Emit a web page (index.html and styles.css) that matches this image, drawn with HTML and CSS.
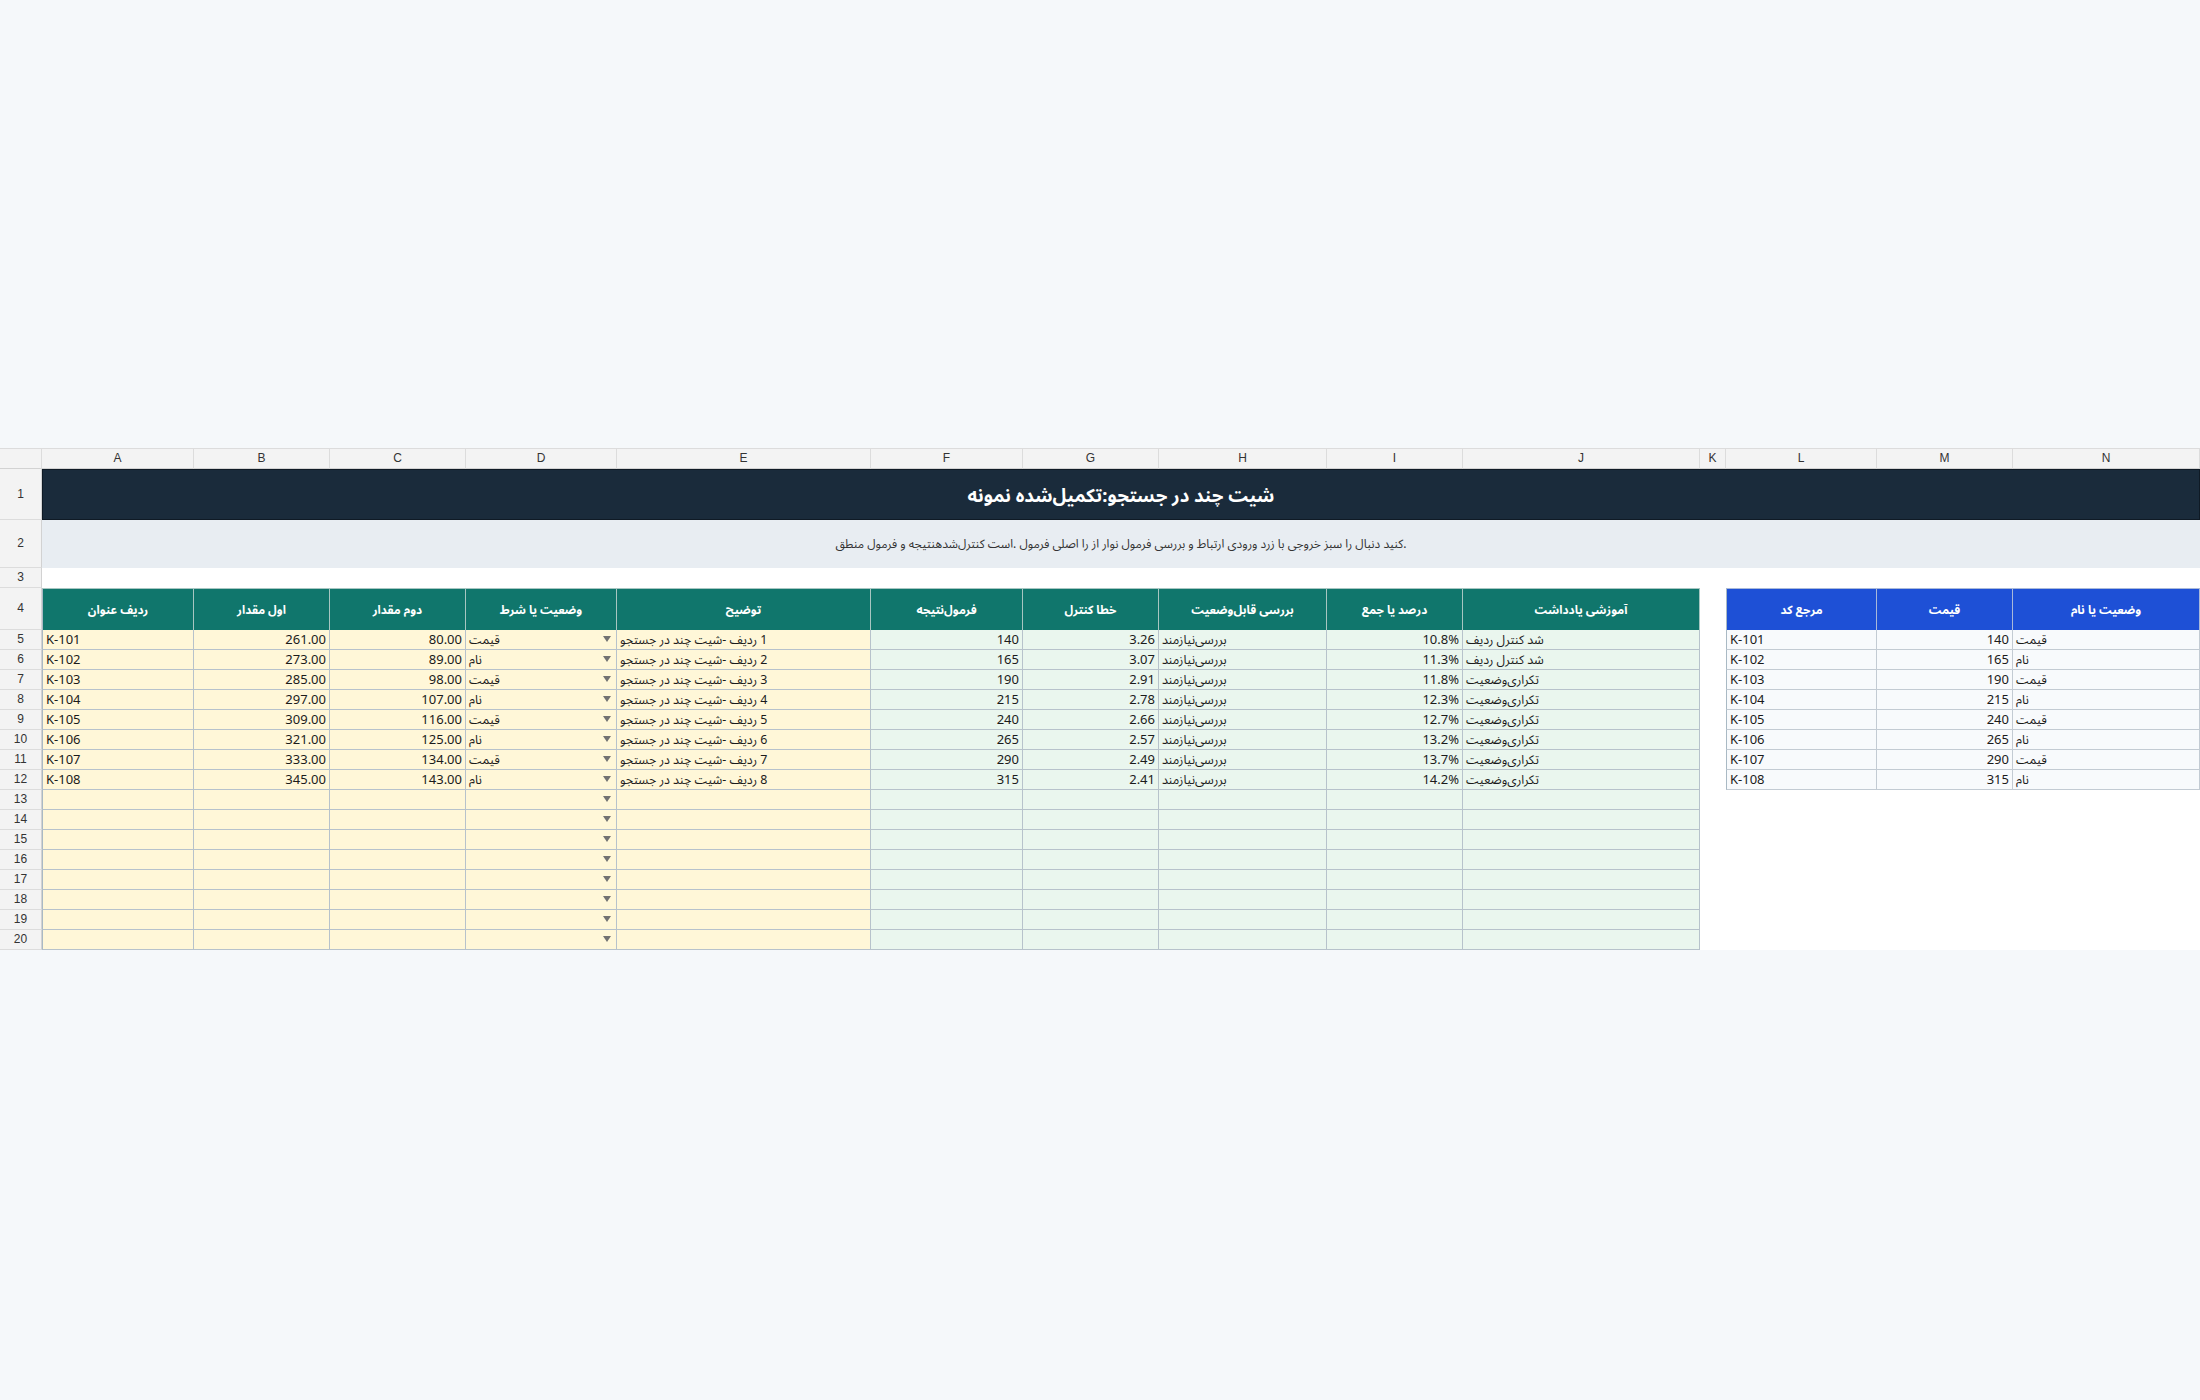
FILE: index.html
```html
<!DOCTYPE html>
<html lang="fa">
<head>
<meta charset="utf-8">
<title>شیت چند در جستجو</title>
<link rel="stylesheet" href="styles.css">
</head>
<body>
<main class="page">
<div class="sheet">
  <div class="c ch"></div><div class="c ch">A</div><div class="c ch">B</div><div class="c ch">C</div><div class="c ch">D</div><div class="c ch">E</div><div class="c ch">F</div><div class="c ch">G</div><div class="c ch">H</div><div class="c ch">I</div><div class="c ch">J</div><div class="c ch">K</div><div class="c ch">L</div><div class="c ch">M</div><div class="c ch">N</div>

  <div class="c rh">1</div><div class="c title" dir="rtl">شیت چند در جستجو:تکمیل&zwnj;شده نمونه</div>
  <div class="c rh">2</div><div class="c note" dir="rtl">.کنید دنبال را سبز خروجی با زرد ورودی ارتباط و بررسی فرمول نوار از را اصلی فرمول .است کنترل&zwnj;شدهنتیجه و فرمول منطق</div>
  <div class="c rh">3</div><div class="c spacer"></div>

  <div class="c rh">4</div>
  <div class="c hd first" dir="rtl">ردیف عنوان</div><div class="c hd" dir="rtl">اول مقدار</div><div class="c hd" dir="rtl">دوم مقدار</div><div class="c hd" dir="rtl">وضعیت یا شرط</div><div class="c hd" dir="rtl">توضیح</div><div class="c hd" dir="rtl">فرمول&zwnj;نتیجه</div><div class="c hd" dir="rtl">خطا کنترل</div><div class="c hd" dir="rtl">بررسی قابل&zwnj;وضعیت</div><div class="c hd" dir="rtl">درصد یا جمع</div><div class="c hd" dir="rtl">آموزشی یادداشت</div>
  <div class="c"></div>
  <div class="c hd blue first" dir="rtl">مرجع کد</div><div class="c hd blue" dir="rtl">قیمت</div><div class="c hd blue" dir="rtl">وضعیت یا نام</div>

  <div class="c rh">5</div>
  <div class="c y first">K-101</div><div class="c y num">261.00</div><div class="c y num">80.00</div><div class="c y dd"><span dir="rtl">قیمت</span><i class="arrow"></i></div><div class="c y" dir="rtl">1 ردیف -شیت چند در جستجو</div>
  <div class="c g num">140</div><div class="c g num">3.26</div><div class="c g" dir="rtl">بررسی&zwnj;نیازمند</div><div class="c g num">10.8%</div><div class="c g" dir="rtl">شد کنترل ردیف</div>
  <div class="c"></div>
  <div class="c w first">K-101</div><div class="c w num">140</div><div class="c w" dir="rtl">قیمت</div>

  <div class="c rh">6</div>
  <div class="c y first">K-102</div><div class="c y num">273.00</div><div class="c y num">89.00</div><div class="c y dd"><span dir="rtl">نام</span><i class="arrow"></i></div><div class="c y" dir="rtl">2 ردیف -شیت چند در جستجو</div>
  <div class="c g num">165</div><div class="c g num">3.07</div><div class="c g" dir="rtl">بررسی&zwnj;نیازمند</div><div class="c g num">11.3%</div><div class="c g" dir="rtl">شد کنترل ردیف</div>
  <div class="c"></div>
  <div class="c w first">K-102</div><div class="c w num">165</div><div class="c w" dir="rtl">نام</div>

  <div class="c rh">7</div>
  <div class="c y first">K-103</div><div class="c y num">285.00</div><div class="c y num">98.00</div><div class="c y dd"><span dir="rtl">قیمت</span><i class="arrow"></i></div><div class="c y" dir="rtl">3 ردیف -شیت چند در جستجو</div>
  <div class="c g num">190</div><div class="c g num">2.91</div><div class="c g" dir="rtl">بررسی&zwnj;نیازمند</div><div class="c g num">11.8%</div><div class="c g" dir="rtl">تکراری&zwnj;وضعیت</div>
  <div class="c"></div>
  <div class="c w first">K-103</div><div class="c w num">190</div><div class="c w" dir="rtl">قیمت</div>

  <div class="c rh">8</div>
  <div class="c y first">K-104</div><div class="c y num">297.00</div><div class="c y num">107.00</div><div class="c y dd"><span dir="rtl">نام</span><i class="arrow"></i></div><div class="c y" dir="rtl">4 ردیف -شیت چند در جستجو</div>
  <div class="c g num">215</div><div class="c g num">2.78</div><div class="c g" dir="rtl">بررسی&zwnj;نیازمند</div><div class="c g num">12.3%</div><div class="c g" dir="rtl">تکراری&zwnj;وضعیت</div>
  <div class="c"></div>
  <div class="c w first">K-104</div><div class="c w num">215</div><div class="c w" dir="rtl">نام</div>

  <div class="c rh">9</div>
  <div class="c y first">K-105</div><div class="c y num">309.00</div><div class="c y num">116.00</div><div class="c y dd"><span dir="rtl">قیمت</span><i class="arrow"></i></div><div class="c y" dir="rtl">5 ردیف -شیت چند در جستجو</div>
  <div class="c g num">240</div><div class="c g num">2.66</div><div class="c g" dir="rtl">بررسی&zwnj;نیازمند</div><div class="c g num">12.7%</div><div class="c g" dir="rtl">تکراری&zwnj;وضعیت</div>
  <div class="c"></div>
  <div class="c w first">K-105</div><div class="c w num">240</div><div class="c w" dir="rtl">قیمت</div>

  <div class="c rh">10</div>
  <div class="c y first">K-106</div><div class="c y num">321.00</div><div class="c y num">125.00</div><div class="c y dd"><span dir="rtl">نام</span><i class="arrow"></i></div><div class="c y" dir="rtl">6 ردیف -شیت چند در جستجو</div>
  <div class="c g num">265</div><div class="c g num">2.57</div><div class="c g" dir="rtl">بررسی&zwnj;نیازمند</div><div class="c g num">13.2%</div><div class="c g" dir="rtl">تکراری&zwnj;وضعیت</div>
  <div class="c"></div>
  <div class="c w first">K-106</div><div class="c w num">265</div><div class="c w" dir="rtl">نام</div>

  <div class="c rh">11</div>
  <div class="c y first">K-107</div><div class="c y num">333.00</div><div class="c y num">134.00</div><div class="c y dd"><span dir="rtl">قیمت</span><i class="arrow"></i></div><div class="c y" dir="rtl">7 ردیف -شیت چند در جستجو</div>
  <div class="c g num">290</div><div class="c g num">2.49</div><div class="c g" dir="rtl">بررسی&zwnj;نیازمند</div><div class="c g num">13.7%</div><div class="c g" dir="rtl">تکراری&zwnj;وضعیت</div>
  <div class="c"></div>
  <div class="c w first">K-107</div><div class="c w num">290</div><div class="c w" dir="rtl">قیمت</div>

  <div class="c rh">12</div>
  <div class="c y first">K-108</div><div class="c y num">345.00</div><div class="c y num">143.00</div><div class="c y dd"><span dir="rtl">نام</span><i class="arrow"></i></div><div class="c y" dir="rtl">8 ردیف -شیت چند در جستجو</div>
  <div class="c g num">315</div><div class="c g num">2.41</div><div class="c g" dir="rtl">بررسی&zwnj;نیازمند</div><div class="c g num">14.2%</div><div class="c g" dir="rtl">تکراری&zwnj;وضعیت</div>
  <div class="c"></div>
  <div class="c w first">K-108</div><div class="c w num">315</div><div class="c w" dir="rtl">نام</div>

  <div class="c rh">13</div><div class="c y first"></div><div class="c y"></div><div class="c y"></div><div class="c y dd"><i class="arrow"></i></div><div class="c y"></div><div class="c g"></div><div class="c g"></div><div class="c g"></div><div class="c g"></div><div class="c g"></div><div class="c tail"></div>
  <div class="c rh">14</div><div class="c y first"></div><div class="c y"></div><div class="c y"></div><div class="c y dd"><i class="arrow"></i></div><div class="c y"></div><div class="c g"></div><div class="c g"></div><div class="c g"></div><div class="c g"></div><div class="c g"></div><div class="c tail"></div>
  <div class="c rh">15</div><div class="c y first"></div><div class="c y"></div><div class="c y"></div><div class="c y dd"><i class="arrow"></i></div><div class="c y"></div><div class="c g"></div><div class="c g"></div><div class="c g"></div><div class="c g"></div><div class="c g"></div><div class="c tail"></div>
  <div class="c rh">16</div><div class="c y first"></div><div class="c y"></div><div class="c y"></div><div class="c y dd"><i class="arrow"></i></div><div class="c y"></div><div class="c g"></div><div class="c g"></div><div class="c g"></div><div class="c g"></div><div class="c g"></div><div class="c tail"></div>
  <div class="c rh">17</div><div class="c y first"></div><div class="c y"></div><div class="c y"></div><div class="c y dd"><i class="arrow"></i></div><div class="c y"></div><div class="c g"></div><div class="c g"></div><div class="c g"></div><div class="c g"></div><div class="c g"></div><div class="c tail"></div>
  <div class="c rh">18</div><div class="c y first"></div><div class="c y"></div><div class="c y"></div><div class="c y dd"><i class="arrow"></i></div><div class="c y"></div><div class="c g"></div><div class="c g"></div><div class="c g"></div><div class="c g"></div><div class="c g"></div><div class="c tail"></div>
  <div class="c rh">19</div><div class="c y first"></div><div class="c y"></div><div class="c y"></div><div class="c y dd"><i class="arrow"></i></div><div class="c y"></div><div class="c g"></div><div class="c g"></div><div class="c g"></div><div class="c g"></div><div class="c g"></div><div class="c tail"></div>
  <div class="c rh">20</div><div class="c y first"></div><div class="c y"></div><div class="c y"></div><div class="c y dd"><i class="arrow"></i></div><div class="c y"></div><div class="c g"></div><div class="c g"></div><div class="c g"></div><div class="c g"></div><div class="c g"></div><div class="c tail"></div>
</div>
</main>
</body>
</html>
```
FILE: styles.css
```css
html, body {
  margin: 0;
  padding: 0;
  background: #f5f8fa;
}

.page {
  height: 1400px;
  display: flex;
  align-items: center;
  padding-bottom: 3px;
  box-sizing: border-box;
}

.sheet {
  width: 2200px;
  display: grid;
  grid-template-columns: 42px 152px 136px 136px 151px 254px 152px 136px 168px 136px 237px 26px 151px 136px 187px;
  grid-template-rows: 21px 51px 48px 20px 42px repeat(16, 20px);
  background: #ffffff;
  font-family: "Noto Sans", "Noto Sans Arabic UI", "Noto Sans Arabic", sans-serif;
  font-size: 13px;
  color: #1b1b1b;
}

.c {
  box-sizing: border-box;
  display: flex;
  align-items: center;
  padding: 0 3px;
  white-space: nowrap;
  overflow: hidden;
  min-width: 0;
}

.ch {
  justify-content: center;
  background: #f3f3f3;
  border-right: 1px solid #dcdcdc;
  border-top: 1px solid #dcdcdc;
  border-bottom: 1px solid #d2d2d2;
  font-family: "Liberation Sans", Arial, sans-serif;
  font-size: 12px;
  color: #333;
}

.rh {
  justify-content: center;
  background: #f3f3f3;
  border-right: 1px solid #d2d2d2;
  border-bottom: 1px solid #dcdcdc;
  font-family: "Liberation Sans", Arial, sans-serif;
  font-size: 12px;
  color: #333;
}

.title {
  grid-column: 2 / 16;
  justify-content: center;
  background: #1a2b3b;
  border: 1px solid #0f1a25;
  color: #ffffff;
  font-size: 18.5px;
  font-weight: 700;
}

.note {
  grid-column: 2 / 16;
  justify-content: center;
  background: #e8edf2;
  color: #333;
  font-size: 12px;
}

.spacer {
  grid-column: 2 / 16;
}

.tail {
  grid-column: 12 / 16;
}

.hd {
  justify-content: center;
  background: #10766c;
  color: #ffffff;
  font-size: 11.8px;
  font-weight: 700;
  border-right: 1px solid #a7c6c1;
  border-top: 1px solid #a7c6c1;
}

.hd.blue {
  background: #1e50d6;
  border-right-color: #a9b9d9;
  border-top-color: #a9b9d9;
}

.hd.first,
.y.first,
.w.first {
  border-left: 1px solid #a9b9c4;
}

.y {
  background: #fff7d8;
  border-right: 1px solid #b7c2cb;
  border-bottom: 1px solid #b7c2cb;
}

.g {
  background: #eaf6ee;
  border-right: 1px solid #b7c2cb;
  border-bottom: 1px solid #b7c2cb;
}

.w {
  background: #f8fafc;
  border-right: 1px solid #c3cbd3;
  border-bottom: 1px solid #c3cbd3;
}

.c[dir="rtl"],
.c > span[dir="rtl"] {
  text-align: left;
}

.y[dir="rtl"],
.g[dir="rtl"],
.w[dir="rtl"],
.dd > span[dir="rtl"] {
  justify-content: flex-end;
  font-size: 12.4px;
}

.num {
  justify-content: flex-end;
}

.dd {
  justify-content: space-between;
  padding-right: 5px;
}

.arrow {
  width: 0;
  height: 0;
  margin-left: auto;
  border-left: 4px solid transparent;
  border-right: 4px solid transparent;
  border-top: 6px solid #727272;
}
```
